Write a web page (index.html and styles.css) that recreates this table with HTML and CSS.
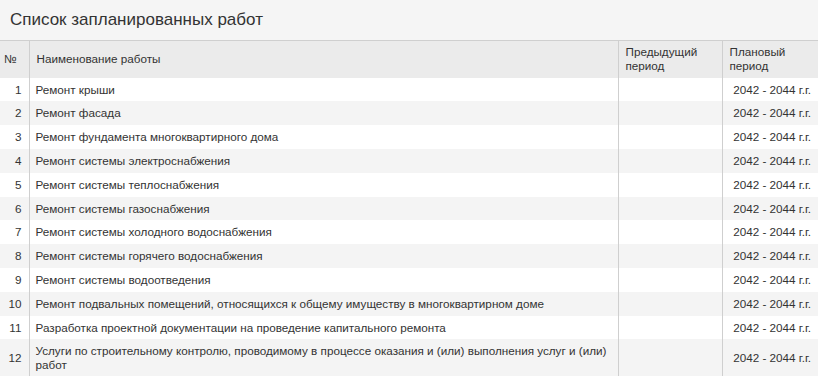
FILE: index.html
```html
<!DOCTYPE html>
<html lang="ru">
<head>
<meta charset="utf-8">
<title>Список запланированных работ</title>
<link rel="stylesheet" href="styles.css">
</head>
<body>
<h1 class="title">Список запланированных работ</h1>
<table class="works">
  <colgroup>
    <col class="c-num">
    <col class="c-name">
    <col class="c-prev">
    <col class="c-plan">
  </colgroup>
  <thead>
    <tr>
      <th class="num">№</th>
      <th>Наименование работы</th>
      <th class="top">Предыдущий период</th>
      <th class="top">Плановый период</th>
    </tr>
  </thead>
  <tbody>
    <tr><td class="num">1</td><td>Ремонт крыши</td><td></td><td class="plan">2042 - 2044 г.г.</td></tr>
    <tr><td class="num">2</td><td>Ремонт фасада</td><td></td><td class="plan">2042 - 2044 г.г.</td></tr>
    <tr><td class="num">3</td><td>Ремонт фундамента многоквартирного дома</td><td></td><td class="plan">2042 - 2044 г.г.</td></tr>
    <tr><td class="num">4</td><td>Ремонт системы электроснабжения</td><td></td><td class="plan">2042 - 2044 г.г.</td></tr>
    <tr><td class="num">5</td><td>Ремонт системы теплоснабжения</td><td></td><td class="plan">2042 - 2044 г.г.</td></tr>
    <tr><td class="num">6</td><td>Ремонт системы газоснабжения</td><td></td><td class="plan">2042 - 2044 г.г.</td></tr>
    <tr><td class="num">7</td><td>Ремонт системы холодного водоснабжения</td><td></td><td class="plan">2042 - 2044 г.г.</td></tr>
    <tr><td class="num">8</td><td>Ремонт системы горячего водоснабжения</td><td></td><td class="plan">2042 - 2044 г.г.</td></tr>
    <tr><td class="num">9</td><td>Ремонт системы водоотведения</td><td></td><td class="plan">2042 - 2044 г.г.</td></tr>
    <tr><td class="num">10</td><td>Ремонт подвальных помещений, относящихся к общему имуществу в многоквартирном доме</td><td></td><td class="plan">2042 - 2044 г.г.</td></tr>
    <tr><td class="num">11</td><td>Разработка проектной документации на проведение капитального ремонта</td><td></td><td class="plan">2042 - 2044 г.г.</td></tr>
    <tr><td class="num">12</td><td>Услуги по строительному контролю, проводимому в процессе оказания и (или) выполнения услуг и (или) работ</td><td></td><td class="plan">2042 - 2044 г.г.</td></tr>
  </tbody>
</table>
</body>
</html>
```
FILE: styles.css
```css
html, body {
  margin: 0;
  padding: 0;
  background: #f5f5f5;
  font-family: "Liberation Sans", Arial, sans-serif;
  color: #333;
}
.title {
  margin: 0;
  padding: 9px 10px 0 10px;
  height: 31px;
  font-size: 17px;
  font-weight: normal;
  line-height: 22px;
  color: #333;
}
.works {
  width: 818px;
  border-collapse: collapse;
  table-layout: fixed;
  font-size: 11.7px;
  line-height: 13.8px;
}
.c-num { width: 29px; }
.c-name { width: 589px; }
.c-prev { width: 104px; }
.c-plan { width: 96px; }
.works th {
  background: #ebebeb;
  font-weight: normal;
  text-align: left;
  padding: 4px 7px 5px 7px;
  border-top: 1px solid #cfcfcf;
  border-left: 1px solid #cfcfcf;
  vertical-align: middle;
}
.works th.top { vertical-align: top; padding-top: 4px; padding-bottom: 5px; }
.works th:first-child { border-left: none; }
.works td {
  padding: 5px 7px 5px 6px;
  border-left: 1px solid #cfcfcf;
  vertical-align: middle;
}
.works td:first-child { border-left: none; }
.works td.num, .works th.num { padding-left: 4px; padding-right: 7px; }
.works td.num { text-align: right; }
.works td.plan { text-align: right; padding-right: 7px; }
.works tbody tr:nth-child(odd) { background: #ffffff; }
.works tbody tr:nth-child(even) { background: #f4f4f4; }
```
